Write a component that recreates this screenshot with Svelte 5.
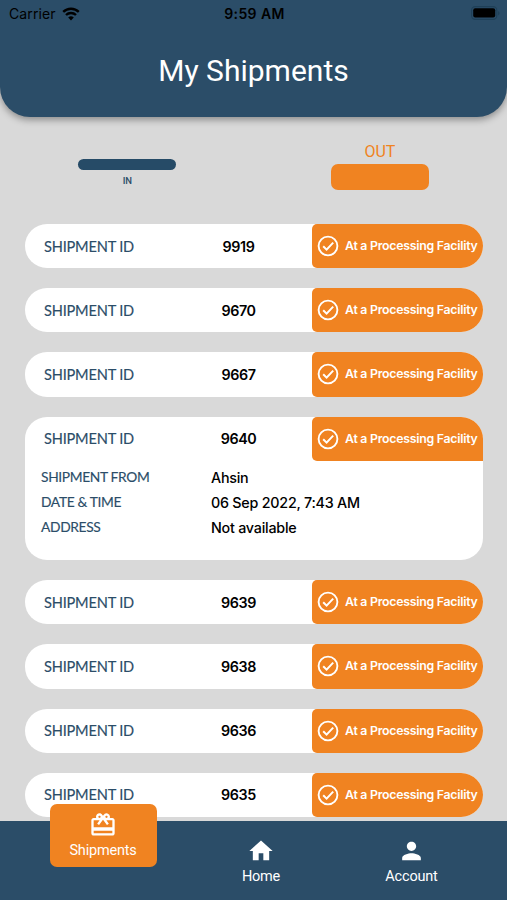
<script>
let shipments = [
    {id: 9919},
    {id: 9670},
    {id: 9667},
    {id: 9640, from: "Ahsin", date: "06 Sep 2022, 7:43 AM", address: "Not available"},
    {id: 9639},
    {id: 9638},
    {id: 9636},
    {id: 9635}
];
let openId = 9640;
let direction = "in";

function toggle(shipment){
    openId = openId == shipment.id ? null : shipment.id;
}
</script>

<main>
    <header>
        <div class="status">
            <div class="carrier">
                <span>Carrier</span>
                <svg width="18" height="14" viewBox="0 0 18 14">
                    <path d="M1.2 4.9a11.2 11.2 0 0 1 15.6 0M4 8a7.2 7.2 0 0 1 10 0" fill="none" stroke="#000" stroke-width="2.4"/>
                    <path d="M9 13.4 6.2 10.5a4 4 0 0 1 5.6 0z"/>
                </svg>
            </div>
            <span class="time">9:59 AM</span>
            <div class="power">
                <svg width="30" height="14" viewBox="0 0 30 14">
                    <rect x=".6" y=".6" width="25.2" height="12.8" rx="3.6" fill="none" stroke="#1f4058" stroke-width="1.1"/>
                    <rect x="2.2" y="2.2" width="22" height="9.4" rx="2"/>
                    <path d="M27.2 5v4.4c1.8-.8 1.8-3.6 0-4.4z" fill="#1f4058"/>
                </svg>
            </div>
        </div>
        <h1>My Shipments</h1>
    </header>

    <section class="tabs">
        <button class="tab in" on:click={() => direction = "in"}>
            <span class="bar"></span>
            <span class="tabName">IN</span>
        </button>
        <button class="tab out" on:click={() => direction = "out"}>
            <span class="tabName">OUT</span>
            <span class="bar"></span>
        </button>
    </section>

    <section class="list">
        {#each shipments as shipment}
        <article class="card" class:open={openId == shipment.id}>
            <button class="row" on:click={() => toggle(shipment)}>
                <span class="label">SHIPMENT ID</span>
                <span class="number">{shipment.id}</span>
                <span class="state">
                    <svg width="22" height="22" viewBox="0 0 22 22" fill="none" stroke="#fff">
                        <circle cx="11" cy="11" r="9.4" stroke-width="1.9"/>
                        <path d="M6.2 11.2l3.4 3.4 6.6-7" stroke-width="2"/>
                    </svg>
                    <span class="stateText">At a Processing Facility</span>
                </span>
            </button>
            {#if openId == shipment.id}
            <dl>
                <dt>SHIPMENT FROM</dt><dd>{shipment.from}</dd>
                <dt>DATE &amp; TIME</dt><dd>{shipment.date}</dd>
                <dt>ADDRESS</dt><dd>{shipment.address}</dd>
            </dl>
            {/if}
        </article>
        {/each}
    </section>

    <nav>
        <button class="navItem active">
            <svg width="28" height="28" viewBox="0 0 24 24" fill="#fff">
                <path d="M20 6h-2.18c.11-.31.18-.65.18-1a2.996 2.996 0 0 0-5.5-1.65l-.5.67-.5-.68C10.96 2.54 10.05 2 9 2 7.34 2 6 3.34 6 5c0 .35.07.69.18 1H4c-1.11 0-1.99.89-1.99 2L2 19c0 1.11.89 2 2 2h16c1.11 0 2-.89 2-2V8c0-1.11-.89-2-2-2zm-5-2c.55 0 1 .45 1 1s-.45 1-1 1-1-.45-1-1 .45-1 1-1zM9 4c.55 0 1 .45 1 1s-.45 1-1 1-1-.45-1-1 .45-1 1-1zm11 15H4v-2h16v2zm0-5H4V8h5.08L7 10.83 8.62 12 11 8.76l1-1.36 1 1.36L15.38 12 17 10.83 14.92 8H20v6z"/>
            </svg>
            <span>Shipments</span>
        </button>
        <button class="navItem">
            <svg width="28" height="28" viewBox="0 0 24 24" fill="#fff">
                <path d="M10 20v-6h4v6h5v-8h3L12 3 2 12h3v8z"/>
            </svg>
            <span>Home</span>
        </button>
        <button class="navItem">
            <svg width="29" height="28" viewBox="0 0 24 24" fill="#fff">
                <path d="M12 12c2.21 0 4-1.79 4-4s-1.79-4-4-4-4 1.79-4 4 1.79 4 4 4zm0 2c-2.67 0-8 1.34-8 4v2h16v-2c0-2.66-5.33-4-8-4z"/>
            </svg>
            <span>Account</span>
        </button>
    </nav>
</main>

<style>
    :global(body) {
        margin: 0;
        background-color: #d9d9d9;
    }
    main {
        display: flex;
        flex-direction: column;
        width: 100%;
        height: 900px;
        overflow: hidden;
        background-color: #d9d9d9;
        font-family: Inter, sans-serif;
    }
    button {
        border: none;
        padding: 0;
        margin: 0;
        background: none;
        font-family: inherit;
    }
    svg {
        display: block;
        flex: none;
    }
    header {
        flex: none;
        height: 117px;
        background-color: #2b4d68;
        border-radius: 0 0 30px 30px;
        box-shadow: 0 3px 7px rgba(0, 0, 0, 0.35);
    }
    .status {
        display: grid;
        grid-template-columns: 1fr auto 1fr;
        align-items: center;
        height: 27px;
        padding: 0 6px 0 9px;
        font-size: 14px;
        color: #000;
    }
    .carrier {
        display: flex;
        align-items: center;
        gap: 6px;
        letter-spacing: 0.1px;
    }
    .time {
        margin-left: -1px;
        font-weight: 600;
        letter-spacing: 0.4px;
    }
    .power {
        display: flex;
        justify-content: flex-end;
        margin-top: -1px;
    }
    h1 {
        margin: 26px 0 0;
        font-family: Roboto, sans-serif;
        font-size: 30px;
        font-weight: 400;
        line-height: 36px;
        text-align: center;
        color: #fff;
    }
    .tabs {
        display: flex;
        flex: none;
        justify-content: space-between;
        height: 107px;
        padding: 0 77.6px 0 78.4px;
        box-sizing: border-box;
    }
    .tab {
        display: flex;
        flex-direction: column;
        align-items: center;
        width: 98px;
        font-family: Roboto, sans-serif;
    }
    .bar {
        width: 98px;
    }
    .in {
        padding-top: 42px;
        color: #2b4d68;
    }
    .in .bar {
        height: 11px;
        border-radius: 5.5px;
        background-color: #264b67;
    }
    .in .tabName {
        font-size: 9.5px;
        font-weight: 500;
        line-height: 12px;
        margin-top: 5px;
    }
    .out {
        padding-top: 25px;
        color: #f08321;
    }
    .out .tabName {
        font-size: 16px;
        line-height: 20px;
        letter-spacing: -0.1px;
        margin-left: -1px;
    }
    .out .bar {
        height: 25.5px;
        margin-top: 2.4px;
        border-radius: 7px;
        background-color: #f08321;
    }
    .list {
        display: flex;
        flex: 1;
        flex-direction: column;
        gap: 20px;
        min-height: 0;
        padding: 0 24px 0 25px;
    }
    .card {
        flex: none;
        height: 44.2px;
        overflow: hidden;
        background-color: #fff;
        border-radius: 22px;
    }
    .open {
        height: 143.6px;
    }
    .row {
        display: grid;
        grid-template-columns: 140px 147px 1fr;
        align-items: center;
        width: 100%;
        height: 44.2px;
        text-align: left;
    }
    .label {
        padding-left: 19px;
        font-family: Lato, sans-serif;
        font-size: 14.6px;
        letter-spacing: -0.2px;
        white-space: nowrap;
        color: #2b4d68;
        -webkit-text-stroke: 0.15px #2b4d68;
    }
    .number {
        text-align: center;
        font-size: 14.3px;
        font-weight: 600;
        letter-spacing: -0.4px;
        color: #000;
    }
    .state {
        display: flex;
        align-items: center;
        gap: 6px;
        height: 100%;
        padding-left: 5px;
        border-radius: 5px 0 0 5px;
        background-color: #f08321;
        color: #fff;
    }
    .stateText {
        margin-top: -1px;
        font-size: 12.3px;
        font-weight: 600;
        letter-spacing: -0.25px;
        white-space: nowrap;
    }
    dl {
        display: grid;
        grid-template-columns: 170px 1fr;
        grid-auto-rows: 25px;
        align-items: center;
        margin: 4px 0 0 16px;
    }
    dt {
        margin-top: -2px;
        font-family: Lato, sans-serif;
        font-size: 13.8px;
        letter-spacing: -0.35px;
        color: #2b4d68;
        -webkit-text-stroke: 0.15px #2b4d68;
    }
    dd {
        margin: 0;
        font-size: 14.3px;
        font-weight: 500;
        letter-spacing: -0.23px;
        color: #000;
    }
    nav {
        display: grid;
        flex: none;
        grid-template-columns: 206px 110px 191px;
        justify-items: center;
        align-items: start;
        height: 79px;
        background-color: #2b4d68;
    }
    .navItem {
        display: flex;
        flex-direction: column;
        align-items: center;
        padding-top: 16px;
        font-family: Roboto, sans-serif;
        font-size: 14.5px;
        line-height: 18px;
        letter-spacing: -0.2px;
        color: #fff;
    }
    .navItem span {
        margin-top: 3px;
    }
    .active {
        width: 107px;
        height: 63px;
        margin-top: -16.6px;
        padding-top: 7px;
        box-sizing: border-box;
        border-radius: 7px;
        background-color: #f08321;
        z-index: 1;
    }
</style>
